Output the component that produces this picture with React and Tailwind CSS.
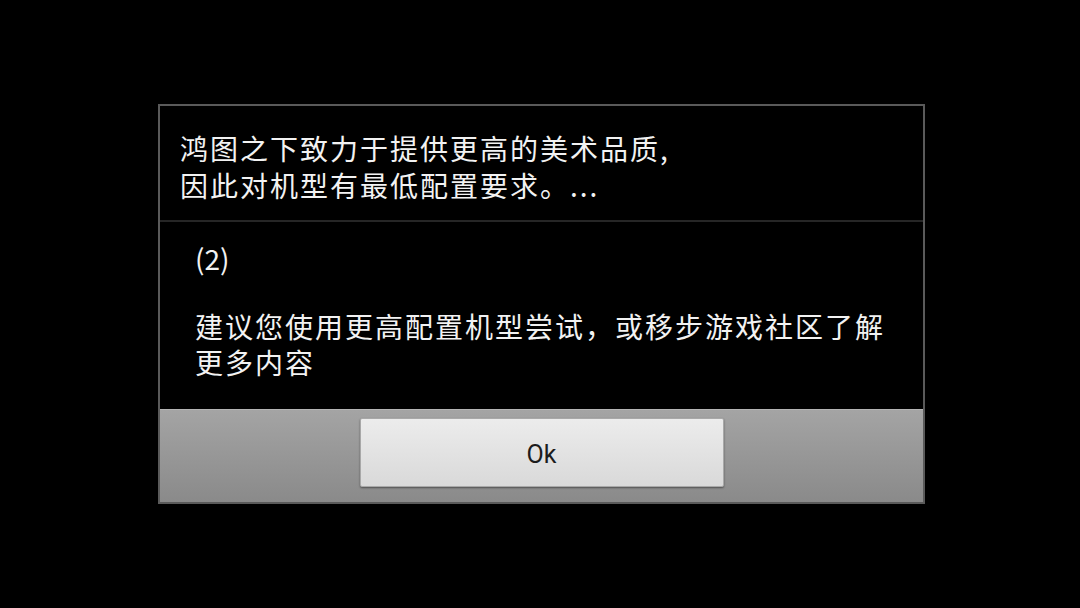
export default function App() {
  const cjk = {
    fontFamily: '"Noto Sans CJK SC", "Noto Sans", sans-serif',
  };
  return (
    <div className="w-[1080px] h-[608px] bg-black pl-[158px] pt-[104px]">
      <div className="w-[767px] h-[400px] border-2 border-[#5a5a5a] flex flex-col bg-black">
        {/* header message */}
        <div
          className="h-[114px] pl-[20px] pt-[24px] text-[28px] leading-[37px] tracking-[2px] text-[#f2f2f2] whitespace-nowrap"
          style={cjk}
        >
          <p>
            鸿图之下致力于提供更高的美术品质,
            <br />
            因此对机型有最低配置要求。...
          </p>
        </div>
        <div className="h-[2px] bg-[#262626]" />
        {/* body */}
        <div
          className="flex-1 pl-[35px] pt-[18px] text-[28px] leading-[36px] tracking-[2px] text-[#f2f2f2] whitespace-nowrap"
          style={cjk}
        >
          <div className="tracking-normal">(2)</div>
          <p className="mt-[32px]">
            建议您使用更高配置机型尝试，或移步游戏社区了解
            <br />
            更多内容
          </p>
        </div>
        {/* button bar */}
        <div className="h-[93px] border-t border-[#b4b4b4] bg-gradient-to-b from-[#a4a4a4] to-[#8a8a8a] flex justify-center pt-[8px]">
          <button
            className="w-[364px] h-[69px] rounded-[2px] border border-[#a8a8a8] bg-gradient-to-b from-[#ececec] to-[#d9d9d9] shadow-[0_1px_2px_rgba(0,0,0,0.45)] text-[25px] text-[#1c1c1c] flex items-center justify-center pt-[4px]"
            style={{ fontFamily: 'Roboto, "Noto Sans", sans-serif' }}
          >
            Ok
          </button>
        </div>
      </div>
    </div>
  );
}
